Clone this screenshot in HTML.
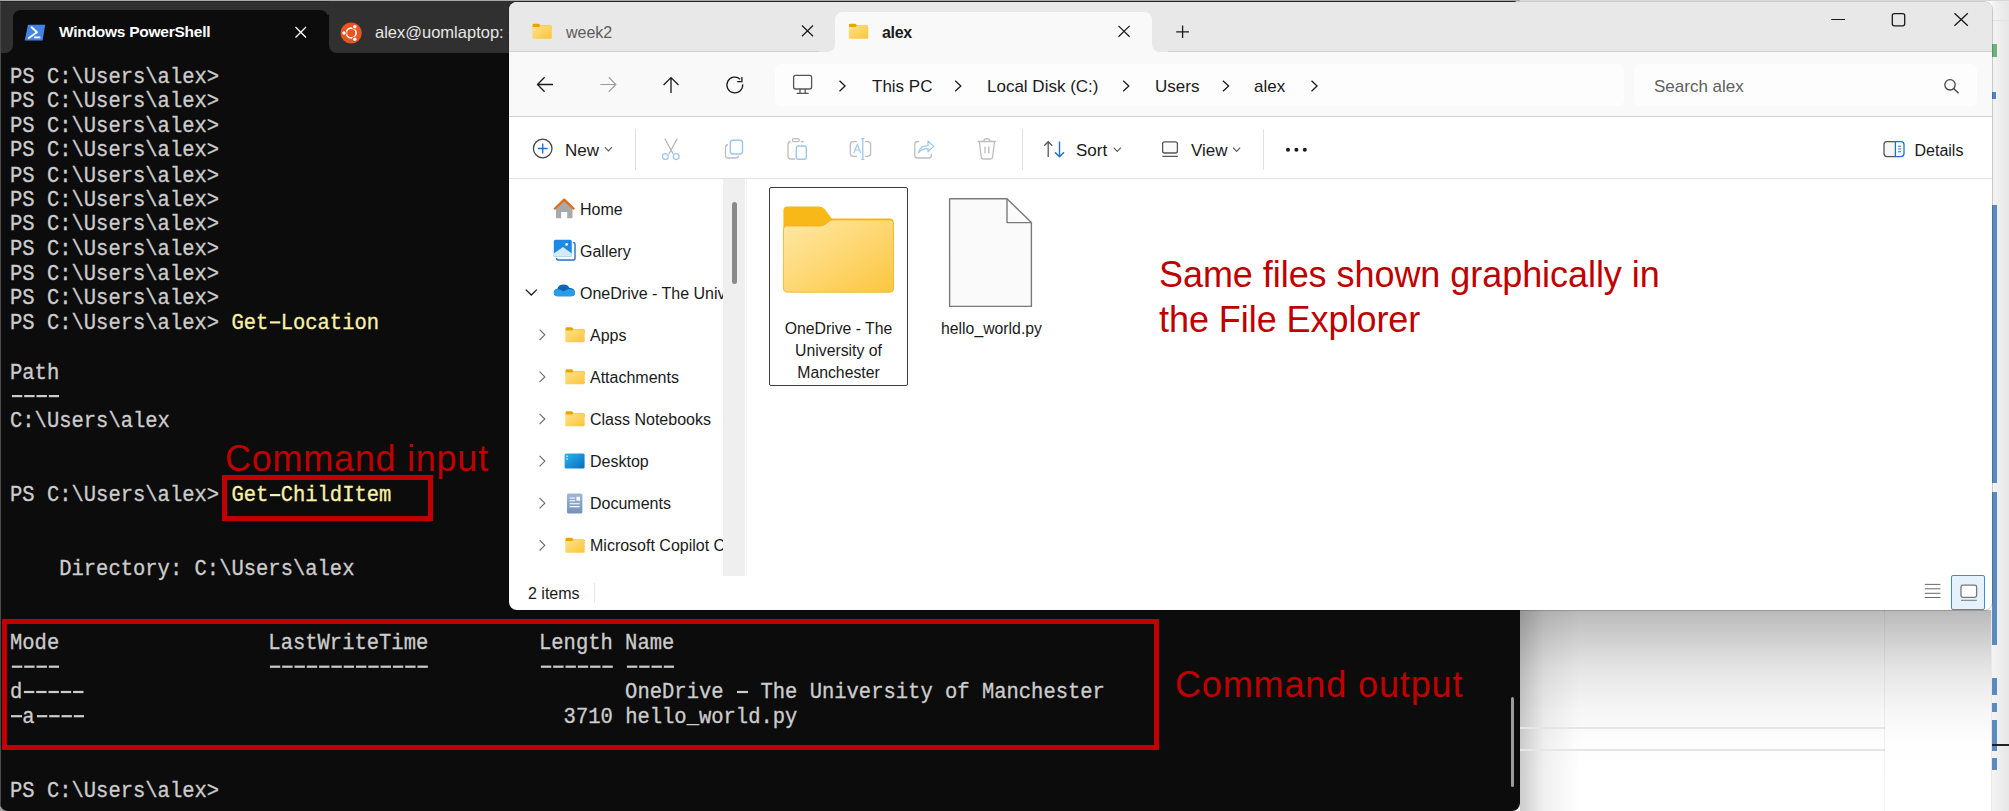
<!DOCTYPE html>
<html><head><meta charset="utf-8">
<style>
*{margin:0;padding:0;box-sizing:border-box}
html,body{width:2009px;height:811px;overflow:hidden;background:#f3f3f3;font-family:"Liberation Sans",sans-serif}
.abs{position:absolute}
#bgtop{left:0;top:0;width:2009px;height:1px;background:linear-gradient(90deg,#a8a8a8 0,#a8a8a8 1520px,#d8d8d8 1520px)}
/* right background */
#rightbg{left:1520px;top:0;width:489px;height:811px;background:#fafafa}
/* terminal */
#term{left:0;top:1px;width:1520px;height:810px;background:#0c0c0c;border-radius:1px 8px 8px 8px;overflow:hidden}
#ttabbar{left:0;top:0;width:1520px;height:52px;background:#0c0c0c}
.ttl{font-size:16.5px;line-height:22px;white-space:nowrap}
#ttab2{left:329px;top:0;width:1191px;height:52px;background:#303030;border-radius:0 0 0 8px}
#ttab1{left:13px;top:9px;width:315px;height:43px;background:#0c0c0c;border-radius:8px 8px 0 0}
.mono{font-family:"Liberation Mono",monospace;font-size:20.5px;line-height:22.37px;transform:scaleY(1.1);-webkit-text-stroke:0.3px currentColor;transform-origin:0 0;color:#cccccc;white-space:pre}
#tlines{left:10px;top:64px}
.y{color:#f9f1a5}
.dh{display:inline-block;height:22.37px;vertical-align:top;color:transparent;-webkit-text-stroke:0;background-image:linear-gradient(90deg,transparent 1.5px,#cccccc 1.5px,#cccccc 11.9px,transparent 11.9px);background-size:12.3px 1.85px;background-position:0 9.45px;background-repeat:repeat-x}
.y .dh{background-image:linear-gradient(90deg,transparent 1.5px,#f9f1a5 1.5px,#f9f1a5 11.9px,transparent 11.9px)}
/* explorer */
#exp{left:509px;top:2px;width:1483px;height:608px;background:#fff;border-radius:8px;overflow:hidden;box-shadow:0 0 0 1px rgba(0,0,0,0.18)}
#etabbar{left:0;top:0;width:1483px;height:50px;background:#e8e8e8;border-bottom:1px solid #d6d6d6}
#etab2{left:326px;top:10px;width:317px;height:41px;background:#f9f9f9;border-radius:8px 8px 0 0}
#addr{left:0;top:50px;width:1483px;height:65px;background:#f9f9f9;border-bottom:1px solid #dcdcdc}
#tools{left:0;top:115px;width:1483px;height:62px;background:#fff;border-bottom:1px solid #e0e0e0}
.etxt{font-size:17px;line-height:22px;color:#1a1a1a;white-space:nowrap}
.ntxt{font-size:16px;line-height:20px;color:#1a1a1a;white-space:nowrap}
.ctxt{font-size:15.8px;line-height:21.8px;color:#1a1a1a;text-align:center}
.red{color:#c00000;font-family:"Liberation Sans",sans-serif}
.rbox{border:4px solid #c00000}
</style></head>
<body>
<div id="rightbg" class="abs"></div>
<div class="abs" style="left:0;top:780px;width:30px;height:31px;background:#9a9a9a"></div>
<div class="abs" style="left:1520px;top:610px;width:489px;height:201px;background:linear-gradient(#b9b9b9,#d0d0d0 15%,#e6e6e6 30%,#f6f6f6 50%,#fdfdfd 65%,#fff 80%)"></div>
<div class="abs" style="left:1520px;top:610px;width:60px;height:201px;background:linear-gradient(90deg,rgba(0,0,0,0.2),rgba(0,0,0,0.06) 40%,rgba(0,0,0,0) 100%)"></div>
<div class="abs" style="left:1520px;top:727px;width:365px;height:2px;background:#e6e6e6"></div>
<div class="abs" style="left:1520px;top:749px;width:365px;height:2px;background:#e6e6e6"></div>
<div class="abs" style="left:1884px;top:610px;width:1px;height:201px;background:rgba(0,0,0,0.05)"></div>
<div class="abs" style="left:1992px;top:0;width:17px;height:811px;background:linear-gradient(90deg,#f4f4f4,#e6e6e6)"></div>
<div class="abs" style="left:1992px;top:20px;width:17px;height:1px;background:#e2e2e2"></div>
<div class="abs" style="left:1992px;top:44px;width:5px;height:13px;background:#6db27c"></div>
<div class="abs" style="left:1992px;top:92px;width:4px;height:7px;background:#4f86c6"></div>
<div class="abs" style="left:1992px;top:205px;width:5px;height:278px;background:#5a8ac0"></div>
<div class="abs" style="left:1992px;top:492px;width:5px;height:153px;background:#5a8ac0"></div>
<div class="abs" style="left:1992px;top:678px;width:5px;height:17px;background:#5a8ac0"></div>
<div class="abs" style="left:1992px;top:703px;width:5px;height:9px;background:#5a8ac0"></div>
<div class="abs" style="left:1992px;top:720px;width:5px;height:31px;background:#5a8ac0"></div>
<div class="abs" style="left:1992px;top:758px;width:5px;height:12px;background:#5a8ac0"></div>
<div class="abs" style="left:1992px;top:744px;width:17px;height:2px;background:#222"></div>
<div class="abs" style="left:1991px;top:610px;width:1px;height:201px;background:#e8e8e8"></div>
<div id="bgtop" class="abs"></div>
<div id="term" class="abs">
  <div class="abs" style="left:0;top:0;width:1520px;height:14px;background:#303030"></div>
  <div class="abs" style="left:0;top:0;width:13px;height:52px;background:#303030;border-radius:0 0 8px 0"></div>
  <div class="abs" style="left:0;top:0;width:1px;height:810px;background:#4a4a4a"></div>
  <div class="abs" style="left:0;top:0;width:1520px;height:1px;background:#262626"></div>
  <div id="ttab1" class="abs"></div>
  <div id="ttab2" class="abs"></div>
  <svg class="abs" style="left:0;top:0" width="520" height="52">
    <polygon points="28,23.8 45.2,23.8 42.6,39.4 24.7,39.4" fill="#4382e6"/>
    <polyline points="31.6,26.2 37,31.2 28.8,37" fill="none" stroke="#fff" stroke-width="1.9" stroke-linecap="round" stroke-linejoin="round"/>
    <line x1="34.8" y1="36.4" x2="39.6" y2="36.4" stroke="#fff" stroke-width="1.8" stroke-linecap="round"/>
    <path d="M295.5,26 L306,36.5 M306,26 L295.5,36.5" stroke="#fff" stroke-width="1.3"/>
    <circle cx="351.2" cy="32.0" r="10.6" fill="#e95420"/>
<circle cx="351.2" cy="32.0" r="4.9" fill="none" stroke="#fff" stroke-width="1.7"/>
<circle cx="344.00" cy="32.00" r="2.7" fill="#e95420"/>
<circle cx="344.00" cy="32.00" r="1.75" fill="#fff"/>
<circle cx="354.80" cy="25.76" r="2.7" fill="#e95420"/>
<circle cx="354.80" cy="25.76" r="1.75" fill="#fff"/>
<circle cx="354.80" cy="38.24" r="2.7" fill="#e95420"/>
<circle cx="354.80" cy="38.24" r="1.75" fill="#fff"/>
</svg>
  <div class="abs ttl" style="left:59px;top:20px;font-weight:bold;color:#fff;font-size:15.5px;letter-spacing:-0.25px">Windows PowerShell</div>
  <div class="abs ttl" style="left:375px;top:20px;color:#e6e6e6">alex@uomlaptop: ~</div>
  <div id="tlines" class="abs mono">PS C:\Users\alex&gt;
PS C:\Users\alex&gt;
PS C:\Users\alex&gt;
PS C:\Users\alex&gt;
PS C:\Users\alex&gt;
PS C:\Users\alex&gt;
PS C:\Users\alex&gt;
PS C:\Users\alex&gt;
PS C:\Users\alex&gt;
PS C:\Users\alex&gt;
PS C:\Users\alex&gt; <span class="y">Get<span class="dh">-</span>Location</span>

Path
<span class="dh">----</span>
C:\Users\alex


PS C:\Users\alex&gt; <span class="y">Get<span class="dh">-</span>ChildItem</span>


    Directory: C:\Users\alex


Mode                 LastWriteTime         Length Name
<span class="dh">----</span>                 <span class="dh">-------------</span>         <span class="dh">------</span> <span class="dh">----</span>
d<span class="dh">-----</span>                                            OneDrive <span class="dh">-</span> The University of Manchester
<span class="dh">-</span>a<span class="dh">----</span>                                       3710 hello_world.py


PS C:\Users\alex&gt;</div>
  <div class="abs red" style="left:225px;top:434.5px;font-size:36px;line-height:45px;letter-spacing:0.75px;white-space:nowrap">Command input</div>
  <div class="abs" style="left:222px;top:474px;width:211px;height:46px;border:5px solid #c00000"></div>
  <div class="abs" style="left:2px;top:618px;width:1157px;height:131px;border:5px solid #c00000"></div>
  <div class="abs red" style="left:1175px;top:660.5px;font-size:36px;line-height:45px;letter-spacing:0.87px;white-space:nowrap">Command output</div>
  <div class="abs" style="left:1511px;top:696px;width:3px;height:90px;background:#9b9b9b;border-radius:2px"></div>
</div>
<div id="exp" class="abs">
 <div class="abs" style="left:-509px;top:-2px;width:2009px;height:811px">
  <!-- tab bar -->
  <div class="abs" style="left:509px;top:0;width:1483px;height:52px;background:#e8e8e8"></div>
  <div class="abs" style="left:509px;top:51px;width:1483px;height:1px;background:#d0d0d0"></div>
  <div class="abs" style="left:827px;top:40px;width:334px;height:12px;background:#f9f9f9"></div>
  <div class="abs" style="left:819px;top:40px;width:16px;height:12px;background:#e8e8e8;border-radius:0 0 8px 0"></div>
  <div class="abs" style="left:1152px;top:40px;width:16px;height:12px;background:#e8e8e8;border-radius:0 0 0 8px"></div>
  <div class="abs" style="left:835px;top:12px;width:317px;height:40px;background:#f9f9f9;border-radius:8px 8px 0 0"></div>
  <div class="abs etxt" style="left:566px;top:22px;color:#5c5c5c;font-size:16px">week2</div>
  <div class="abs etxt" style="left:882px;top:22px;color:#1a1a1a;font-size:16px;font-weight:bold;letter-spacing:-0.3px">alex</div>
  <!-- address row -->
  <div class="abs" style="left:509px;top:52px;width:1483px;height:64px;background:#f9f9f9"></div>
  <div class="abs" style="left:509px;top:116px;width:1483px;height:1px;background:#d2d2d2"></div>
  <div class="abs" style="left:775px;top:64px;width:849px;height:42px;background:#fdfdfd;border-radius:6px"></div>
  <div class="abs" style="left:1634px;top:64px;width:343px;height:42px;background:#fdfdfd;border-radius:6px"></div>
  <div class="abs etxt" style="left:872px;top:76px">This PC</div>
  <div class="abs etxt" style="left:987px;top:76px">Local Disk (C:)</div>
  <div class="abs etxt" style="left:1155px;top:76px">Users</div>
  <div class="abs etxt" style="left:1254px;top:76px">alex</div>
  <div class="abs etxt" style="left:1654px;top:76px;color:#5f5f5f">Search alex</div>
  <!-- toolbar -->
  <div class="abs" style="left:509px;top:117px;width:1483px;height:61px;background:#fff"></div>
  <div class="abs" style="left:509px;top:178px;width:1483px;height:1px;background:#e3e3e3"></div>
  <div class="abs etxt" style="left:565px;top:140px">New</div>
  <div class="abs etxt" style="left:1076px;top:140px">Sort</div>
  <div class="abs etxt" style="left:1191px;top:140px">View</div>
  <div class="abs etxt" style="left:1914.5px;top:140px;font-size:16px">Details</div>
  <div class="abs" style="left:635px;top:129px;width:1px;height:41px;background:#e0e0e0"></div>
  <div class="abs" style="left:1022px;top:129px;width:1px;height:41px;background:#e0e0e0"></div>
  <div class="abs" style="left:1263px;top:129px;width:1px;height:41px;background:#e0e0e0"></div>
  <!-- nav pane -->
  <div class="abs" style="left:723px;top:179px;width:22px;height:397px;background:#efefef"></div>
  <div class="abs" style="left:732px;top:202px;width:5px;height:82px;background:#8a8a8a;border-radius:3px"></div>
  <div class="abs" style="left:746px;top:179px;width:1px;height:397px;background:#f2f2f2"></div>
  <div class="abs" style="left:509px;top:179px;width:214px;height:397px;overflow:hidden">
   <div class="abs" style="left:-509px;top:-178px;width:800px;height:600px">
    <div class="abs ntxt" style="left:580px;top:199px">Home</div>
    <div class="abs ntxt" style="left:580px;top:241px">Gallery</div>
    <div class="abs ntxt" style="left:580px;top:283px">OneDrive - The University of Manchester</div>
    <div class="abs ntxt" style="left:590px;top:325px">Apps</div>
    <div class="abs ntxt" style="left:590px;top:367px">Attachments</div>
    <div class="abs ntxt" style="left:590px;top:409px">Class Notebooks</div>
    <div class="abs ntxt" style="left:590px;top:451px">Desktop</div>
    <div class="abs ntxt" style="left:590px;top:493px">Documents</div>
    <div class="abs ntxt" style="left:590px;top:535px">Microsoft Copilot Chat Files</div>
   </div>
  </div>
  <!-- content -->
  <div class="abs" style="left:769px;top:187px;width:139px;height:199px;border:1.5px solid #3c3c3c;border-radius:2px"></div>
  <div class="abs ctxt" style="left:770px;top:318px;width:137px">OneDrive - The University of Manchester</div>
  <div class="abs ctxt" style="left:921px;top:318px;width:141px">hello_world.py</div>
  <!-- status -->
  <div class="abs ntxt" style="left:528px;top:584px">2 items</div>
  <div class="abs" style="left:594px;top:583px;width:1px;height:19px;background:#e5e5e5"></div>
  <div class="abs" style="left:1951px;top:575px;width:34px;height:35px;background:#e5f1fb;border:1.2px solid #3b8fe0;border-radius:2px"></div>
<svg class="abs" style="left:0;top:0" width="2009" height="811">
<defs>
 <linearGradient id="fg" x1="0" y1="0" x2="1" y2="1"><stop offset="0" stop-color="#ffe28a"/><stop offset="1" stop-color="#fcc43a"/></linearGradient>
 <linearGradient id="bfg" x1="0" y1="0" x2="1" y2="1"><stop offset="0" stop-color="#ffe9a6"/><stop offset="1" stop-color="#fcc63f"/></linearGradient>
 <linearGradient id="dsk" x1="0" y1="0" x2="1" y2="1"><stop offset="0" stop-color="#2bb6ef"/><stop offset="1" stop-color="#0b6cc0"/></linearGradient>
 <linearGradient id="doc" x1="0" y1="0" x2="0" y2="1"><stop offset="0" stop-color="#9fb8d6"/><stop offset="1" stop-color="#7491b8"/></linearGradient>
 <linearGradient id="cld" x1="0" y1="0" x2="0" y2="1"><stop offset="0" stop-color="#1f8ae0"/><stop offset="1" stop-color="#0a64c8"/></linearGradient>
</defs>
<g transform="translate(532,23.5) scale(1.0,1.0)">
 <path d="M0.5,1.5 Q0.5,0.3 1.7,0.3 L6.8,0.3 L8.6,2 L18.5,2 Q19.6,2 19.6,3.2 L19.6,6 L0.5,6 Z" fill="#e9a400"/>
 <path d="M0.3,3.4 L7,3.4 L8.6,2.3 L18.6,2.3 Q19.7,2.3 19.7,3.5 L19.7,14.3 Q19.7,15.3 18.7,15.3 L1.3,15.3 Q0.3,15.3 0.3,14.3 Z" fill="url(#fg)"/>
</g><g transform="translate(848.5,23.5) scale(1.0,1.0)">
 <path d="M0.5,1.5 Q0.5,0.3 1.7,0.3 L6.8,0.3 L8.6,2 L18.5,2 Q19.6,2 19.6,3.2 L19.6,6 L0.5,6 Z" fill="#e9a400"/>
 <path d="M0.3,3.4 L7,3.4 L8.6,2.3 L18.6,2.3 Q19.7,2.3 19.7,3.5 L19.7,14.3 Q19.7,15.3 18.7,15.3 L1.3,15.3 Q0.3,15.3 0.3,14.3 Z" fill="url(#fg)"/>
</g><path d="M802,25.5 L813,36.3 M813,25.5 L802,36.3" stroke="#1a1a1a" stroke-width="1.2"/>
<path d="M1118.5,25.9 L1129.6,36.7 M1129.6,25.9 L1118.5,36.7" stroke="#1a1a1a" stroke-width="1.2"/>
<path d="M1182.6,25.5 L1182.6,38.1 M1176.2,31.8 L1189,31.8" stroke="#1a1a1a" stroke-width="1.3"/>
<path d="M1831.2,19.5 L1845,19.5" stroke="#1a1a1a" stroke-width="1.2"/>
<rect x="1892.3" y="13.6" width="12.4" height="12.2" rx="2" fill="none" stroke="#1a1a1a" stroke-width="1.3"/>
<path d="M1954.5,13.2 L1967.8,25.8 M1967.8,13.2 L1954.5,25.8" stroke="#1a1a1a" stroke-width="1.3"/>
<!-- nav arrows -->
<path d="M537.5,84.5 L553,84.5 M544.6,77.2 L537.5,84.5 L544.6,91.8" fill="none" stroke="#1a1a1a" stroke-width="1.3"/>
<path d="M600.3,84.5 L615.8,84.5 M608.7,77.2 L615.8,84.5 L608.7,91.8" fill="none" stroke="#9a9a9a" stroke-width="1.2"/>
<path d="M671,77.6 L671,93 M663.6,85 L671,77.6 L678.5,85" fill="none" stroke="#1a1a1a" stroke-width="1.3"/>
<path d="M740.2,79.2 A7.9,7.9 0 1 0 742.7,84.4" fill="none" stroke="#1a1a1a" stroke-width="1.3"/>
<path d="M741.9,77 L741.9,81.6 L737.2,81.6" fill="none" stroke="#1a1a1a" stroke-width="1.3" stroke-linejoin="miter"/>
<!-- monitor -->
<rect x="793.6" y="75.4" width="18" height="13.6" rx="2" fill="none" stroke="#555" stroke-width="1.3"/>
<path d="M800,89 L800,93 M805.2,89 L805.2,93 M796.6,93.4 L808.6,93.4" stroke="#555" stroke-width="1.3"/>
<path d="M839.5,80.8 L845.1,86 L839.5,91.2" fill="none" stroke="#1a1a1a" stroke-width="1.3"/>
<path d="M955.2,80.8 L960.8000000000001,86 L955.2,91.2" fill="none" stroke="#1a1a1a" stroke-width="1.3"/>
<path d="M1123.2,80.8 L1128.8,86 L1123.2,91.2" fill="none" stroke="#1a1a1a" stroke-width="1.3"/>
<path d="M1223,80.8 L1228.6,86 L1223,91.2" fill="none" stroke="#1a1a1a" stroke-width="1.3"/>
<path d="M1311.5,80.8 L1317.1,86 L1311.5,91.2" fill="none" stroke="#1a1a1a" stroke-width="1.3"/>
<circle cx="1950" cy="84.8" r="5.2" fill="none" stroke="#444" stroke-width="1.3"/>
<path d="M1953.7,88.6 L1958.6,93.3" stroke="#444" stroke-width="1.4"/>
<!-- New -->
<circle cx="542.7" cy="148.5" r="9.3" fill="none" stroke="#444" stroke-width="1.3"/>
<path d="M542.7,143.6 L542.7,153.4 M537.8,148.5 L547.6,148.5" stroke="#1a73d4" stroke-width="1.4"/>
<path d="M604.8,147.2 L608.4,151.0 L612.0,147.2" fill="none" stroke="#5a5a5a" stroke-width="1.1"/><path d="M1113.7,147.6 L1117.3,151.4 L1120.9,147.6" fill="none" stroke="#5a5a5a" stroke-width="1.1"/><path d="M1233,147.6 L1236.6,151.4 L1240.2,147.6" fill="none" stroke="#5a5a5a" stroke-width="1.1"/>
<!-- cut -->
<path d="M664.8,138.6 L673.2,154 M677.3,138.6 L668.9,154" stroke="#b4b4b4" stroke-width="1.2"/>
<circle cx="665.4" cy="156.6" r="2.9" fill="none" stroke="#9cc8ef" stroke-width="1.3"/>
<circle cx="676.2" cy="156.6" r="2.9" fill="none" stroke="#9cc8ef" stroke-width="1.3"/>
<!-- copy -->
<path d="M728,144.5 Q725.5,145 725.5,148 L725.5,155.5 Q725.5,158 728,158 L735.5,158 Q738.5,158 738.6,155.6" fill="none" stroke="#bdbdbd" stroke-width="1.3"/>
<rect x="730.3" y="140.2" width="12.2" height="13.8" rx="2.4" fill="none" stroke="#9cc8ef" stroke-width="1.4"/>
<!-- paste -->
<path d="M790.7,141.5 Q788,141.5 788,144.5 L788,156 Q788,159 791,159 L795,159 M803.5,142.5 Q803.5,141.5 801,141.5" fill="none" stroke="#bdbdbd" stroke-width="1.3"/>
<rect x="792.5" y="138.6" width="6.8" height="3" rx="1.3" fill="none" stroke="#bdbdbd" stroke-width="1.2"/>
<rect x="796.3" y="146" width="10" height="13.3" rx="2" fill="none" stroke="#9cc8ef" stroke-width="1.4"/>
<!-- rename -->
<path d="M857,141.6 L853,141.6 Q850.3,141.6 850.3,144.5 L850.3,153.6 Q850.3,156.4 853,156.4 L857,156.4 M865,141.6 L867.6,141.6 Q870.6,141.6 870.6,144.5 L870.6,153.6 Q870.6,156.4 867.6,156.4 L865,156.4" fill="none" stroke="#bdbdbd" stroke-width="1.3"/>
<path d="M853.7,153 L857.3,144.6 L860.8,153 M855,150 L859.6,150" fill="none" stroke="#9cc8ef" stroke-width="1.2"/>
<path d="M861.2,138.6 L864.4,138.6 M862.8,138.6 L862.8,159.4 M861.2,159.4 L864.4,159.4" fill="none" stroke="#9cc8ef" stroke-width="1.3"/>
<!-- share -->
<path d="M919,141.5 L917.4,141.5 Q914.8,141.5 914.8,144.2 L914.8,155.4 Q914.8,158 917.4,158 L928.7,158 Q931.3,158 931.3,155.4 L931.3,154" fill="none" stroke="#bdbdbd" stroke-width="1.3"/>
<path d="M918.5,152.5 Q920.5,145.5 928,145.6 L928,141 L933.7,146.4 L928,151.8 L928,148.6 Q922.5,148.5 918.5,152.5 Z" fill="none" stroke="#9cc8ef" stroke-width="1.2" stroke-linejoin="round"/>
<!-- delete -->
<path d="M977.6,141.5 L996.2,141.5 M983.8,141.3 Q983.8,138.6 986.9,138.6 Q990,138.6 990,141.3 M979.4,142 L981.2,157.2 Q981.4,159 983.2,159 L990.6,159 Q992.4,159 992.6,157.2 L994.4,142 M985,146.5 L985,153.5 M988.8,146.5 L988.8,153.5" fill="none" stroke="#bdbdbd" stroke-width="1.3"/>
<!-- sort -->
<path d="M1048.2,157 L1048.2,141.6 M1044.2,145.8 L1048.2,141.6 L1052.2,145.8" fill="none" stroke="#555" stroke-width="1.3"/>
<path d="M1059.5,141.4 L1059.5,156.8 M1055,152.2 L1059.5,156.8 L1064,152.2" fill="none" stroke="#1a73d4" stroke-width="1.4"/>
<!-- view -->
<rect x="1162.6" y="141.8" width="14.8" height="11.2" rx="2" fill="#fafafa" stroke="#555" stroke-width="1.3"/>
<path d="M1162.4,156.4 L1177.8,156.4" stroke="#555" stroke-width="1.3"/>
<circle cx="1288" cy="149.8" r="2" fill="#1a1a1a"/>
<circle cx="1296.4" cy="149.8" r="2" fill="#1a1a1a"/>
<circle cx="1304.8" cy="149.8" r="2" fill="#1a1a1a"/>
<!-- details -->
<path d="M1895.4,141.6 L1887,141.6 Q1884,141.6 1884,144.6 L1884,153.6 Q1884,156.6 1887,156.6 L1895.4,156.6" fill="#f6f6f6" stroke="#555" stroke-width="1.3"/>
<path d="M1895.4,141.6 L1901,141.6 Q1904,141.6 1904,144.6 L1904,153.6 Q1904,156.6 1901,156.6 L1895.4,156.6 Z" fill="#fff" stroke="#1a73d4" stroke-width="1.3"/>
<path d="M1898,146.3 L1901.2,146.3 M1898,149 L1901.2,149 M1898,151.7 L1901.2,151.7" stroke="#1a73d4" stroke-width="1.1"/>
<!-- nav icons -->
<path d="M556,208.5 L564.2,200.5 L572.5,208.5 L572.5,217.6 Q572.5,218.2 571.8,218.2 L567.2,218.2 L567.2,212 L561.2,212 L561.2,218.2 L556.6,218.2 Q556,218.2 556,217.6 Z" fill="#a9a9a9"/>
<path d="M554.2,209.2 L564.2,199.6 L574.2,209.2" fill="none" stroke="#e06a12" stroke-width="2.2" stroke-linejoin="round"/>
<path d="M572.8,242.6 L573.6,242.6 Q575,242.6 575,244 L575,258.6 Q575,260 573.6,260 L558,260 Q556.6,260 556.6,258.6 L556.6,258" fill="none" stroke="#1f6fc9" stroke-width="1.4"/>
<rect x="553.8" y="239.8" width="18" height="17" rx="1.6" fill="#1e88e5"/>
<path d="M553.8,253.5 L563,247 L571.8,253.5 L571.8,255.2 Q571.8,256.8 570.2,256.8 L555.4,256.8 Q553.8,256.8 553.8,255.2 Z" fill="#d4ebfb"/>
<circle cx="566.6" cy="244.4" r="1.4" fill="#fff"/>
<path d="M557.5,296.2 Q553.8,296.2 553.8,292.6 Q553.8,289.4 557.2,289 Q558.8,284.6 563.6,284.6 Q567.6,284.6 569.6,288 Q574.8,288.2 575,292.4 Q575,296.2 571.2,296.2 Z" fill="#0a64bd"/>
<path d="M557.5,296.2 Q553.8,296.2 553.8,292.6 Q553.8,289.4 557.6,289.2 Q560.5,289.2 563.5,291.6 L566,290.2 Q568.5,288.8 571,289.2 Q575,290 575,293 Q575,296.2 571.2,296.2 Z" fill="#2a9ce8"/>
<path d="M525.8,289.6 L531.3,295 L536.8,289.6" fill="none" stroke="#1a1a1a" stroke-width="1.3"/>
<path d="M539.6,329.6 L544.8,334.8 L539.6,340.0" fill="none" stroke="#707070" stroke-width="1.2"/>
<path d="M539.6,371.7 L544.8,376.9 L539.6,382.09999999999997" fill="none" stroke="#707070" stroke-width="1.2"/>
<path d="M539.6,413.8 L544.8,419 L539.6,424.2" fill="none" stroke="#707070" stroke-width="1.2"/>
<path d="M539.6,455.90000000000003 L544.8,461.1 L539.6,466.3" fill="none" stroke="#707070" stroke-width="1.2"/>
<path d="M539.6,498.0 L544.8,503.2 L539.6,508.4" fill="none" stroke="#707070" stroke-width="1.2"/>
<path d="M539.6,540.0999999999999 L544.8,545.3 L539.6,550.5" fill="none" stroke="#707070" stroke-width="1.2"/>
<g transform="translate(565,327) scale(1.0,1.0)">
 <path d="M0.5,1.5 Q0.5,0.3 1.7,0.3 L6.8,0.3 L8.6,2 L18.5,2 Q19.6,2 19.6,3.2 L19.6,6 L0.5,6 Z" fill="#e9a400"/>
 <path d="M0.3,3.4 L7,3.4 L8.6,2.3 L18.6,2.3 Q19.7,2.3 19.7,3.5 L19.7,14.3 Q19.7,15.3 18.7,15.3 L1.3,15.3 Q0.3,15.3 0.3,14.3 Z" fill="url(#fg)"/>
</g><g transform="translate(565,369) scale(1.0,1.0)">
 <path d="M0.5,1.5 Q0.5,0.3 1.7,0.3 L6.8,0.3 L8.6,2 L18.5,2 Q19.6,2 19.6,3.2 L19.6,6 L0.5,6 Z" fill="#e9a400"/>
 <path d="M0.3,3.4 L7,3.4 L8.6,2.3 L18.6,2.3 Q19.7,2.3 19.7,3.5 L19.7,14.3 Q19.7,15.3 18.7,15.3 L1.3,15.3 Q0.3,15.3 0.3,14.3 Z" fill="url(#fg)"/>
</g><g transform="translate(565,411) scale(1.0,1.0)">
 <path d="M0.5,1.5 Q0.5,0.3 1.7,0.3 L6.8,0.3 L8.6,2 L18.5,2 Q19.6,2 19.6,3.2 L19.6,6 L0.5,6 Z" fill="#e9a400"/>
 <path d="M0.3,3.4 L7,3.4 L8.6,2.3 L18.6,2.3 Q19.7,2.3 19.7,3.5 L19.7,14.3 Q19.7,15.3 18.7,15.3 L1.3,15.3 Q0.3,15.3 0.3,14.3 Z" fill="url(#fg)"/>
</g><g transform="translate(565,537.5) scale(1.0,1.0)">
 <path d="M0.5,1.5 Q0.5,0.3 1.7,0.3 L6.8,0.3 L8.6,2 L18.5,2 Q19.6,2 19.6,3.2 L19.6,6 L0.5,6 Z" fill="#e9a400"/>
 <path d="M0.3,3.4 L7,3.4 L8.6,2.3 L18.6,2.3 Q19.7,2.3 19.7,3.5 L19.7,14.3 Q19.7,15.3 18.7,15.3 L1.3,15.3 Q0.3,15.3 0.3,14.3 Z" fill="url(#fg)"/>
</g><rect x="564.6" y="453.4" width="20" height="15" rx="1.5" fill="url(#dsk)"/>
<rect x="566.4" y="455.6" width="1.3" height="1.3" fill="#fff"/><rect x="566.4" y="458.4" width="1.3" height="1.3" fill="#fff"/>
<rect x="567" y="493.4" width="15.4" height="20" rx="1.5" fill="url(#doc)"/>
<path d="M569.6,498 L575,498 M569.6,500.8 L575,500.8 M569.6,503.8 L579.6,503.8 M569.6,506.6 L579.6,506.6" stroke="#fff" stroke-width="1.1"/>
<rect x="576.4" y="496.8" width="3.6" height="3.8" fill="#fff"/>
<!-- big folder -->
<path d="M783.4,210.5 Q783.4,206.4 787.5,206.4 L819,206.4 Q822.5,206.4 824.6,209 L831.6,218.6 L889.4,218.6 Q893.6,218.6 893.6,222.8 L893.6,240 L783.4,240 Z" fill="#f7b818"/>
<path d="M783.4,229.5 Q783.4,226 787,226 L819.5,226 Q823.5,226 826.5,223.4 L829.5,221 Q831.4,219.9 834,219.9 L889.4,219.9 Q893.6,219.9 893.6,224 L893.6,288 Q893.6,292.2 889.4,292.2 L787.6,292.2 Q783.4,292.2 783.4,288 Z" fill="url(#bfg)" stroke="#eeb020" stroke-width="0.8"/>
<!-- file -->
<path d="M949.6,198.8 L1007,198.8 L1031.4,222.6 L1031.4,306.4 L949.6,306.4 Z" fill="#fafafa" stroke="#7a7a7a" stroke-width="1.4" stroke-linejoin="round"/>
<path d="M1007,198.8 L1007,222.6 L1031.4,222.6" fill="none" stroke="#7a7a7a" stroke-width="1.4" stroke-linejoin="round"/>
<!-- view toggles -->
<path d="M1924.8,584.4 L1940.4,584.4 M1924.8,588.8 L1940.4,588.8 M1924.8,593.3 L1940.4,593.3 M1924.8,597.5 L1940.4,597.5" stroke="#6a6a6a" stroke-width="1"/>
<rect x="1961" y="585.2" width="15.6" height="12.2" rx="1.8" fill="#fff" stroke="#777" stroke-width="1.3"/>
<path d="M1961,600.3 L1976.8,600.3" stroke="#777" stroke-width="1"/>
</svg>
  <div id="annot1" class="abs red" style="left:1159px;top:252px;font-size:36px;line-height:45.4px;letter-spacing:-0.05px;white-space:nowrap">Same files shown graphically in<br>the File Explorer</div>
 </div>
</div>
</body></html>
